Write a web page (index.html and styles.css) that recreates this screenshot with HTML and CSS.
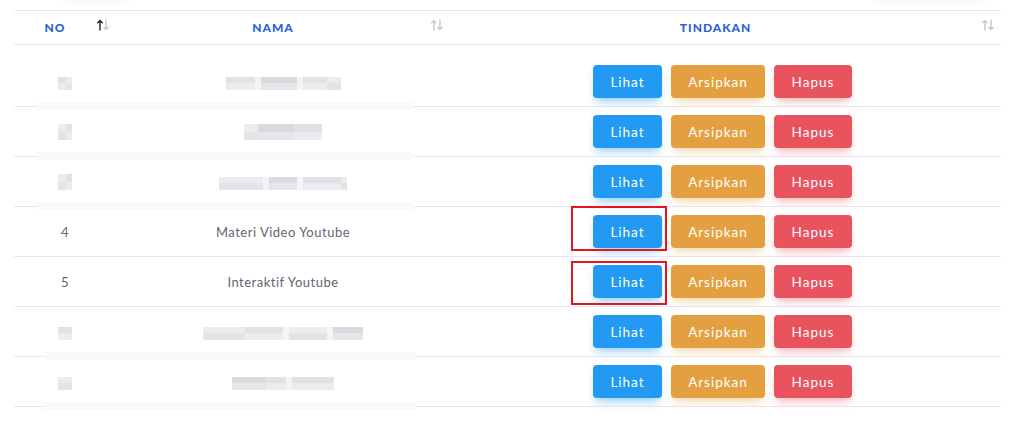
FILE: index.html
```html
<!DOCTYPE html>
<html lang="id">
<head>
<meta charset="utf-8">
<title>Tabel</title>
<link rel="stylesheet" href="styles.css">
</head>
<body>
<div class="top-shadow left"></div>
<div class="top-shadow right"></div>
<div class="wrap">
<table class="tbl">
  <colgroup><col class="c1"><col class="c2"><col class="c3"></colgroup>
  <thead>
    <tr>
      <th class="h1">NO<span class="sort"><svg viewBox="0 0 12 12" width="12" height="12"><g fill="none" stroke-width="1.4" stroke-linecap="round" stroke-linejoin="round"><path d="M3 11V1.5M0.8 3.8L3 1.5 5.2 3.8" stroke="#222"/><path d="M9 1V10.5M6.8 8.2L9 10.5 11.2 8.2" stroke="#c8c8cc"/></g></svg></span></th>
      <th class="h2">NAMA<span class="sort"><svg viewBox="0 0 12 12" width="12" height="12"><g fill="none" stroke="#c8c8cc" stroke-width="1.4" stroke-linecap="round" stroke-linejoin="round"><path d="M3 11V1.5M0.8 3.8L3 1.5 5.2 3.8"/><path d="M9 1V10.5M6.8 8.2L9 10.5 11.2 8.2"/></g></svg></span></th>
      <th class="h3">TINDAKAN<span class="sort"><svg viewBox="0 0 12 12" width="12" height="12"><g fill="none" stroke="#c8c8cc" stroke-width="1.4" stroke-linecap="round" stroke-linejoin="round"><path d="M3 11V1.5M0.8 3.8L3 1.5 5.2 3.8"/><path d="M9 1V10.5M6.8 8.2L9 10.5 11.2 8.2"/></g></svg></span></th>
    </tr>
  </thead>
  <tbody>
    <tr class="first">
      <td><span class="px"><i class="b" style="width:8px"></i><i class="c" style="width:6px"></i></span></td>
      <td class="band"><span class="px"><i class="b" style="width:29px"></i><i class="gap"></i><i class="a" style="width:36px"></i><i class="gap"></i><i class="b" style="width:24px"></i><i class="c" style="width:14px"></i></span></td>
      <td><div class="acts"><button class="btn lihat">Lihat</button><button class="btn arsip">Arsipkan</button><button class="btn hapus">Hapus</button></div></td>
    </tr>
    <tr>
      <td><span class="px tall"><i class="c" style="width:8px"></i><i class="b" style="width:6px"></i></span></td>
      <td class="band"><span class="px tall"><i class="c" style="width:14px"></i><i class="a" style="width:36px"></i><i class="b" style="width:28px"></i></span></td>
      <td><div class="acts"><button class="btn lihat">Lihat</button><button class="btn arsip">Arsipkan</button><button class="btn hapus">Hapus</button></div></td>
    </tr>
    <tr>
      <td><span class="px tall"><i class="c" style="width:8px"></i><i class="b" style="width:6px"></i></span></td>
      <td class="band"><span class="px"><i class="c" style="width:44px"></i><i class="gap"></i><i class="a" style="width:28px"></i><i class="gap"></i><i class="b" style="width:38px"></i><i class="c" style="width:6px"></i></span></td>
      <td><div class="acts"><button class="btn lihat">Lihat</button><button class="btn arsip">Arsipkan</button><button class="btn hapus">Hapus</button></div></td>
    </tr>
    <tr>
      <td>4</td>
      <td>Materi Video Youtube</td>
      <td><div class="acts"><span class="mark m4"><button class="btn lihat">Lihat</button></span><button class="btn arsip">Arsipkan</button><button class="btn hapus">Hapus</button></div></td>
    </tr>
    <tr>
      <td>5</td>
      <td>Interaktif Youtube</td>
      <td><div class="acts"><span class="mark m5"><button class="btn lihat">Lihat</button></span><button class="btn arsip">Arsipkan</button><button class="btn hapus">Hapus</button></div></td>
    </tr>
    <tr>
      <td><span class="px"><i class="b" style="width:14px"></i></span></td>
      <td class="band low"><span class="px"><i class="c" style="width:42px"></i><i class="b" style="width:38px"></i><i class="gap"></i><i class="c" style="width:38px"></i><i class="gap"></i><i class="a" style="width:30px"></i></span></td>
      <td><div class="acts"><button class="btn lihat">Lihat</button><button class="btn arsip">Arsipkan</button><button class="btn hapus">Hapus</button></div></td>
    </tr>
    <tr>
      <td><span class="px"><i class="c" style="width:14px"></i></span></td>
      <td class="band low"><span class="px"><i class="a" style="width:34px"></i><i class="b" style="width:20px"></i><i class="gap"></i><i class="b" style="width:42px"></i></span></td>
      <td><div class="acts"><button class="btn lihat">Lihat</button><button class="btn arsip">Arsipkan</button><button class="btn hapus">Hapus</button></div></td>
    </tr>
  </tbody>
</table>
</div>
</body>
</html>
```
FILE: styles.css
```css
* { box-sizing: border-box; }
html, body { margin: 0; padding: 0; background: #fff; }
body {
  font-family: Lato, "Open Sans", "Noto Sans", sans-serif;
  color: #656573;
  overflow: hidden;
  height: 430px;
}
.top-shadow {
  position: absolute;
  top: -20px;
  height: 18px;
  border-radius: 10px;
  box-shadow: 0 2px 10px rgba(0,0,0,0.06);
  background: #fff;
}
.top-shadow.left { left: 62px; width: 72px; }
.top-shadow.right { left: 872px; width: 118px; }
.wrap {
  padding: 10px 0 0 14px;
  width: 1001px;
}
.tbl {
  width: 987px;
  border-collapse: collapse;
  table-layout: fixed;
}
.c1 { width: 102px; }
.c2 { width: 334px; }
.c3 { width: 551px; }
th {
  position: relative;
  height: 34px;
  padding: 0 20px 0 0;
  border-top: 1px solid #e6e8ef;
  border-bottom: 1px solid #e3e6ee;
  color: #2d5fdd;
  font-size: 12px;
  font-weight: 900;
  letter-spacing: 1px;
  text-align: center;
}
.sort {
  position: absolute;
  right: 7px;
  top: 8px;
  display: flex;
}
td {
  height: 50px;
  padding: 0;
  border-bottom: 1px solid #e6e8ef;
  text-align: center;
  font-size: 13px;
  letter-spacing: 0.5px;
  color: #656573;
  vertical-align: middle;
}
tr.first td { height: 62px; padding-top: 12px; }
td.band { position: relative; }
td.band::after {
  content: "";
  position: absolute;
  left: -79px;
  width: 376px;
  bottom: -4px;
  height: 8px;
  background: #f8f9fb;
}
td.band.low::after { left: -72px; width: 372px; }
.px {
  display: inline-flex;
  align-items: stretch;
  height: 13px;
  vertical-align: middle;
  filter: blur(0.7px);
}
.px.tall { height: 16px; }
.px i { display: block; }
.px .a { background: linear-gradient(#d9d9df 50%, #e6e6ea 50%); }
.px .b { background: linear-gradient(#e1e1e6 50%, #ececf0 50%); }
.px .c { background: linear-gradient(#ececf0 50%, #e3e3e8 50%); }
.px .gap { width: 6px; background: #f4f4f6; }
.acts {
  display: flex;
  justify-content: center;
  gap: 9px;
  padding-right: 6px;
}
.btn {
  height: 33px;
  border: 0;
  border-radius: 4px;
  color: #fff;
  font-family: Lato, "Open Sans", sans-serif;
  font-size: 13.5px;
  letter-spacing: 1px;
  padding: 0 10px;
  cursor: pointer;
}
.lihat { background: #2299f2; width: 69px; box-shadow: 0 6px 10px -3px rgba(34,153,242,0.5); }
.arsip { background: #e4a040; width: 94px; box-shadow: 0 6px 10px -3px rgba(228,160,64,0.45); }
.hapus { background: #e9535d; width: 78px; box-shadow: 0 6px 10px -3px rgba(233,83,93,0.45); }
.mark { position: relative; display: block; }
.mark::before {
  content: "";
  position: absolute;
  border: 2px solid #e8141c;
  left: -22px;
  right: -5px;
  pointer-events: none;
}
.m4::before { top: -9px; bottom: -3px; }
.m5::before { top: -4px; bottom: -7px; }
```
